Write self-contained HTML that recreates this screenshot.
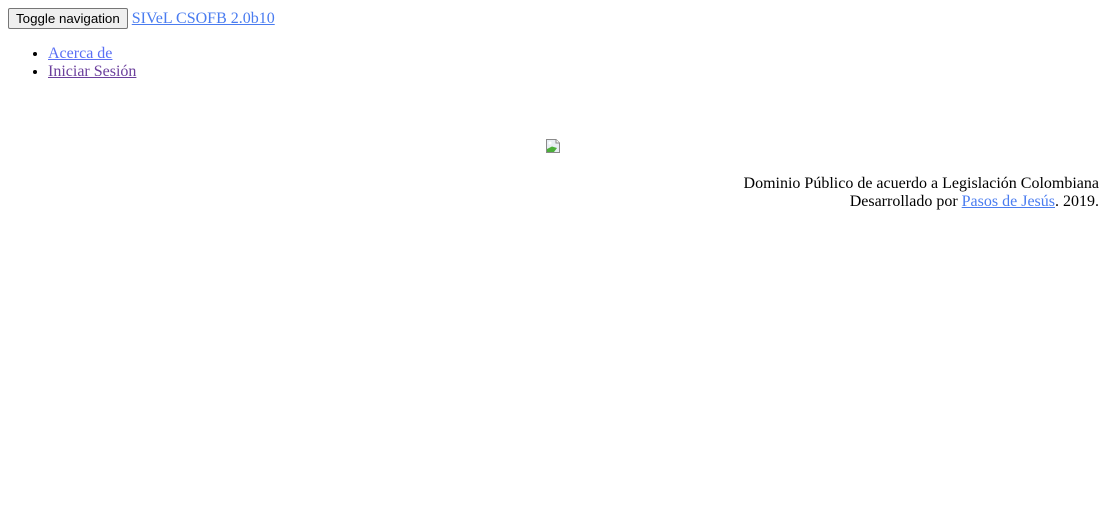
<!DOCTYPE html>
<html><head><meta charset="utf-8"><style>
html,body{margin:0;padding:0;background:#fff;}
body{margin:8px;font-family:"Liberation Serif",serif;font-size:16px;color:#000;line-height:18px;}
button{font-family:"Liberation Sans",Arial,sans-serif;font-size:13.33px;padding:1px 7px;height:21px;border:1px solid #767676;border-radius:2px;background:#efefef;color:#000;vertical-align:baseline;margin:0;}
a{color:#4a7cf0;}
a.v{color:#6b3f9c;}
a.l{color:#5a6ff5;}
ul{margin:16px 0;padding-left:40px;}
.img{text-align:center;margin-top:56px;height:18px;}
.foot{text-align:right;margin-top:20px;}
</style></head><body>
<div><button>Toggle navigation</button> <a href="#">SIVeL CSOFB 2.0b10</a></div>
<ul><li><a class="l" href="#">Acerca de</a></li><li><a class="v" href="#">Iniciar Sesión</a></li></ul>
<div class="img"><svg width="16" height="16" viewBox="0 0 16 16" style="vertical-align:top;position:relative;left:-1px;top:1px"><path d="M1.5 1.5H11L14.5 5V14.5H1.5Z" fill="#e8eef4" stroke="#8a8a8a"/><path d="M2 14V11L7 8.5L12 10L9 14Z" fill="#4caf3a"/><path d="M11 1.5V5H14.5" fill="#fff" stroke="#8a8a8a"/><circle cx="5" cy="5" r="1.5" fill="#fff"/></svg></div>
<div class="foot">Dominio Público de acuerdo a Legislación Colombiana<br>Desarrollado por <a href="#">Pasos de Jesús</a>. 2019.</div>
</body></html>
